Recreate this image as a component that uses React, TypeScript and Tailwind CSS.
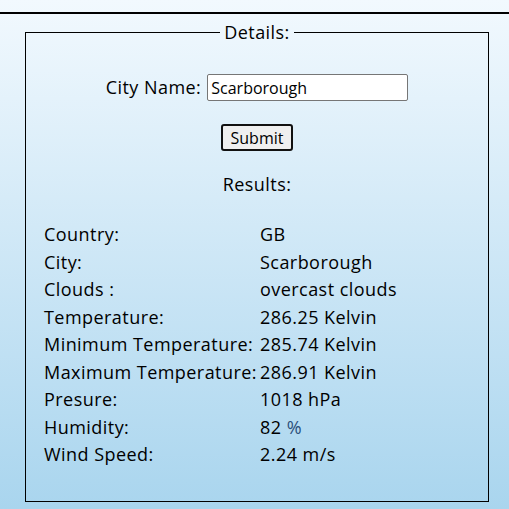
const rows: [string, React.ReactNode][] = [
  ['Country:', 'GB'],
  ['City:', 'Scarborough'],
  ['Clouds :', 'overcast clouds'],
  ['Temperature:', '286.25 Kelvin'],
  ['Minimum Temperature:', '285.74 Kelvin'],
  ['Maximum Temperature:', '286.91 Kelvin'],
  ['Presure:', '1018 hPa'],
  [
    'Humidity:',
    <>
      82 <span className="text-[#2b4f7a]">%</span>
    </>,
  ],
  ['Wind Speed:', '2.24 m/s'],
]

export default function App() {
  return (
    <div className="min-h-[509px] w-[509px] bg-gradient-to-b from-[#f2f9fe] to-[#a9d5ee] pt-3 font-['Open_Sans',sans-serif] text-[18px] tracking-[0.45px] text-black">
      <div className="border-t-2 border-black" />
      <fieldset className="mt-[8px] ml-[25px] w-[464px] border border-black px-[18px] pb-[32px]">
        <legend className="mx-auto px-1 leading-[21px]">Details:</legend>
        <div className="mt-[31px] flex items-center justify-center gap-[6px]">
          <label htmlFor="city">City Name:</label>
          <input
            id="city"
            defaultValue="Scarborough"
            className="h-[27px] w-[201px] rounded-[2px] border border-[#767676] bg-white px-[3px] text-[16px] tracking-normal"
          />
        </div>
        <div className="mt-[23px] flex justify-center">
          <button className="h-[27px] w-[72px] rounded-[3px] border-2 border-[#111] bg-[#efefef] text-[16px] tracking-normal">
            Submit
          </button>
        </div>
        <p className="mt-[23px] text-center leading-[21px]">Results:</p>
        <div className="mt-[26px] grid grid-cols-[216px_1fr] leading-[27.5px]">
          {rows.map(([label, value]) => (
            <div key={label} className="contents">
              <span>{label}</span>
              <span>{value}</span>
            </div>
          ))}
        </div>
      </fieldset>
    </div>
  )
}
